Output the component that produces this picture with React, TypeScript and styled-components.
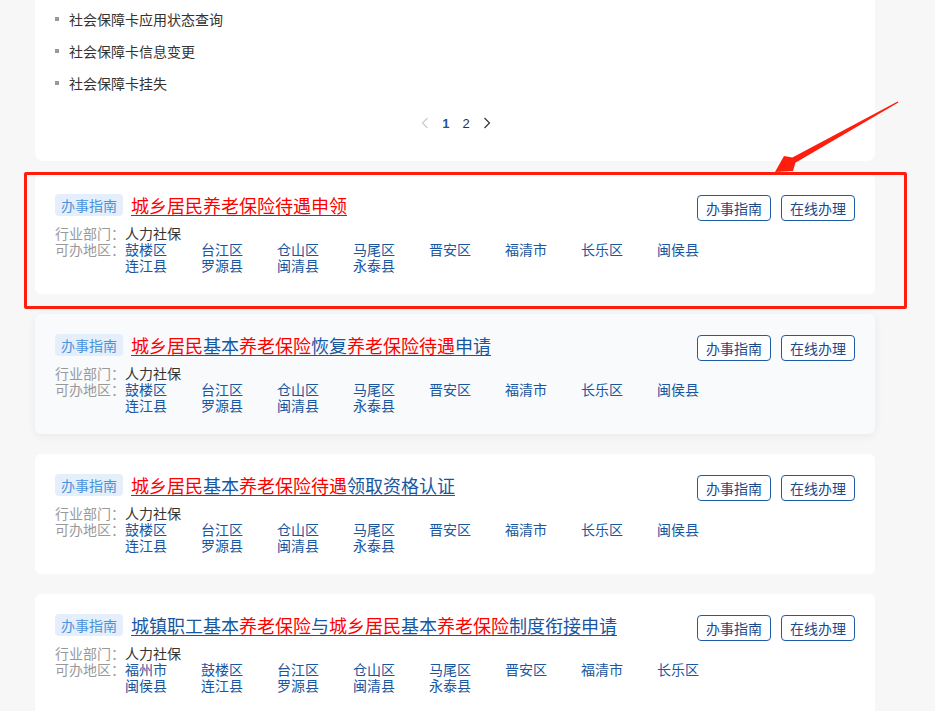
import React from 'react';
import styled, { createGlobalStyle } from 'styled-components';

const GlobalStyle = createGlobalStyle`
  html, body {
    margin: 0;
    padding: 0;
    background: #f7f7f7;
    font-family: "Noto Sans CJK SC", "Liberation Sans", sans-serif;
    font-size: 14px;
    color: #333;
  }
`;

const Page = styled.div`
  position: relative;
  width: 935px;
  height: 711px;
  overflow: hidden;
`;

const Column = styled.div`
  width: 840px;
  margin-left: 35px;
  display: flex;
  flex-direction: column;
  gap: 20px;
`;

const ListCard = styled.div`
  background: #fff;
  border-radius: 0 0 8px 8px;
  padding: 3px 20px 28px;
  margin-bottom: -7px;
`;

const List = styled.ul`
  list-style: none;
  margin: 0;
  padding: 0;
`;

const ListItem = styled.li`
  display: flex;
  align-items: center;
  height: 32px;
  line-height: 32px;
  color: #333;

  &::before {
    content: '';
    width: 4px;
    height: 4px;
    background: #999;
    margin-right: 10px;
  }
`;

const Pager = styled.div`
  display: flex;
  justify-content: center;
  align-items: center;
  gap: 13px;
  margin-top: 14px;
  height: 20px;
  font-family: "Liberation Sans", sans-serif;
  font-size: 13px;
  padding-left: 2px;
`;

const PageNum = styled.span<{ $active?: boolean }>`
  color: ${(p) => (p.$active ? '#1a56a0' : '#333')};
  font-weight: ${(p) => (p.$active ? 700 : 400)};
`;

const Chevron = styled.svg<{ $disabled?: boolean }>`
  width: 8px;
  height: 12px;
  stroke: ${(p) => (p.$disabled ? '#ccc' : '#333')};
  fill: none;
  stroke-width: 1.2;
`;

const Card = styled.div<{ $hover?: boolean }>`
  background: ${(p) => (p.$hover ? '#f8fafc' : '#fff')};
  border-radius: 6px;
  box-shadow: ${(p) => (p.$hover ? '0 2px 10px rgba(0, 0, 0, 0.06)' : 'none')};
  padding: 20px 20px 21px;
  display: flex;
  justify-content: space-between;
  align-items: flex-start;
`;

const Main = styled.div`
  flex: 1;
  min-width: 0;
  display: flex;
  flex-direction: column;
  gap: 9px;
`;

const TitleRow = styled.div`
  display: flex;
  align-items: center;
  gap: 8px;
  height: 22px;
`;

const Tag = styled.span`
  background: #e5effb;
  color: #4a92dc;
  border-radius: 4px;
  padding: 0 6px;
  height: 22px;
  line-height: 22px;
  font-size: 14px;
`;

const Title = styled.a`
  font-size: 18px;
  line-height: 22px;
  color: #1a56a0;
  text-decoration: underline;
  text-decoration-color: #1a56a0;
  text-underline-offset: 2px;
  cursor: pointer;
`;

const Hit = styled.span`
  color: #ff0000;
`;

const Info = styled.div`
  display: grid;
  grid-template-columns: 70px auto;
  line-height: 16px;
  font-size: 14px;
`;

const Label = styled.span`
  color: #999;
`;

const Value = styled.span`
  color: #333;
`;

const Regions = styled.div`
  display: grid;
  grid-template-columns: repeat(8, 76px);
`;

const Region = styled.a`
  color: #1a56a0;
  cursor: pointer;
`;

const Actions = styled.div`
  flex-shrink: 0;
  display: flex;
  gap: 10px;
  margin-top: 1px;
`;

const Button = styled.button`
  width: 74px;
  height: 26px;
  padding: 0;
  background: #fff;
  border: 1px solid #1f5ca6;
  border-radius: 4px;
  color: #1a4a8a;
  font-family: inherit;
  font-size: 14px;
  cursor: pointer;
`;

const Highlight = styled.div`
  position: absolute;
  left: 24px;
  top: 172px;
  width: 877px;
  height: 131px;
  border: 3px solid #ff1d0d;
  border-radius: 2px;
  pointer-events: none;
`;

const ArrowLayer = styled.svg`
  position: absolute;
  left: 0;
  top: 0;
  pointer-events: none;
`;

type Part = [string, boolean?];

interface Service {
  title: Part[];
  regions: string[];
  hover?: boolean;
}

const base = ['鼓楼区', '台江区', '仓山区', '马尾区', '晋安区', '福清市', '长乐区', '闽侯县', '连江县', '罗源县', '闽清县', '永泰县'];

const services: Service[] = [
  { title: [['城乡居民养老保险待遇申领', true]], regions: base },
  {
    title: [['城乡居民', true], ['基本'], ['养老保险', true], ['恢复'], ['养老保险待遇', true], ['申请']],
    regions: base,
    hover: true,
  },
  {
    title: [['城乡居民', true], ['基本'], ['养老保险待遇', true], ['领取资格认证']],
    regions: base,
  },
  {
    title: [
      ['城镇职工基本'],
      ['养老保险', true],
      ['与'],
      ['城乡居民', true],
      ['基本'],
      ['养老保险', true],
      ['制度衔接申请'],
    ],
    regions: ['福州市', ...base],
  },
];

const ServiceCard = ({ service }: { service: Service }) => (
  <Card $hover={service.hover}>
    <Main>
      <TitleRow>
        <Tag>办事指南</Tag>
        <Title>
          {service.title.map(([text, hit], i) => (hit ? <Hit key={i}>{text}</Hit> : <span key={i}>{text}</span>))}
        </Title>
      </TitleRow>
      <Info>
        <Label>行业部门：</Label>
        <Value>人力社保</Value>
        <Label>可办地区：</Label>
        <Regions>
          {service.regions.map((r) => (
            <Region key={r}>{r}</Region>
          ))}
        </Regions>
      </Info>
    </Main>
    <Actions>
      <Button>办事指南</Button>
      <Button>在线办理</Button>
    </Actions>
  </Card>
);

export default function App() {
  return (
    <Page>
      <GlobalStyle />
      <Column>
        <ListCard>
          <List>
            <ListItem>社会保障卡应用状态查询</ListItem>
            <ListItem>社会保障卡信息变更</ListItem>
            <ListItem>社会保障卡挂失</ListItem>
          </List>
          <Pager>
            <Chevron $disabled viewBox="0 0 8 12">
              <path d="M6.5 1 L1.5 6 L6.5 11" />
            </Chevron>
            <PageNum $active>1</PageNum>
            <PageNum>2</PageNum>
            <Chevron viewBox="0 0 8 12">
              <path d="M1.5 1 L6.5 6 L1.5 11" />
            </Chevron>
          </Pager>
        </ListCard>
        {services.map((s, i) => (
          <ServiceCard key={i} service={s} />
        ))}
      </Column>
      <Highlight />
      <ArrowLayer width="935" height="711" viewBox="0 0 935 711">
        <polygon
          points="898.4,102.6 795.4,162.8 793,171 775,172 784,156 792.4,157.6 897.6,101.4"
          fill="#ff1d0d"
        />
      </ArrowLayer>
    </Page>
  );
}
